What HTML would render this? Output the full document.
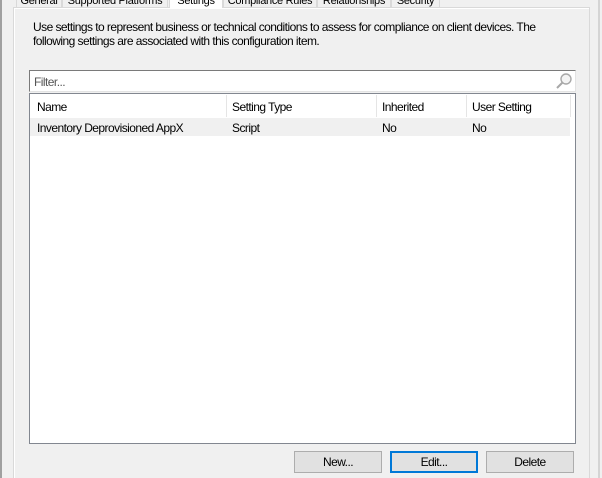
<!DOCTYPE html>
<html><head><meta charset="utf-8"><style>
*{margin:0;padding:0;box-sizing:border-box}
body{width:602px;height:478px;background:#f0f0f0;position:relative;overflow:hidden;font-family:"Liberation Sans",Tahoma,sans-serif;font-size:12px;color:#000}
.a{position:absolute}
.tab{position:absolute;top:-4px;height:11px;border:1px solid #d9d9d9;border-bottom:none;background:#f0f0f0;font-size:11px;line-height:8px;text-align:center;overflow:hidden;color:#000;letter-spacing:-0.3px}
.t{position:absolute;white-space:nowrap;letter-spacing:-0.55px}
.btn{position:absolute;top:451px;width:88px;height:22px;background:#e1e1e1;border:1px solid #adadad;text-align:center;line-height:20px;font-size:12px;letter-spacing:-0.55px}
</style></head><body>
<div class="a" style="left:0;top:0;width:2px;height:478px;background:#a0a0a0"></div>
<div class="a" style="left:598px;top:0;width:2px;height:478px;background:#d4d4d4"></div>
<div class="a" style="left:13px;top:7px;width:577px;height:471px;border:1px solid #d9d9d9;border-bottom:none;background:#f0f0f0"></div>
<div class="a" style="left:14px;top:8px;width:575px;height:470px;border:1px solid #fff;border-bottom:none;border-right:none"></div>
<div class="tab" style="left:16px;width:46px">General</div>
<div class="tab" style="left:62px;width:106px">Supported Platforms</div>
<div class="tab" style="left:169px;width:54px;height:12px;background:#fff;border-color:#d9d9d9">Settings</div>
<div class="tab" style="left:223px;width:94px">Compliance Rules</div>
<div class="tab" style="left:317px;width:74px">Relationships</div>
<div class="tab" style="left:391px;width:49px">Security</div>
<div class="t" style="left:33px;top:20px;line-height:14px">Use settings to represent business or technical conditions to assess for compliance on client devices. The<br>following settings are associated with this configuration item.</div>
<div class="a" style="left:29px;top:70px;width:547px;height:22px;background:#fff;border:1px solid #e3e3e3;border-top-color:#7a7a7a;border-left-color:#7a7a7a"></div>
<div class="t" style="left:34px;top:75px;color:#555">Filter...</div>
<svg class="a" style="left:555px;top:72px" width="18" height="18" viewBox="0 0 18 18"><circle cx="11" cy="7" r="5" fill="#f4f4f4" stroke="#a8a8a8" stroke-width="1.4"/><line x1="7.5" y1="10.5" x2="2" y2="16" stroke="#a8a8a8" stroke-width="2"/></svg>
<div class="a" style="left:29px;top:93px;width:547px;height:351px;background:#fff;border:1px solid #828790"></div>
<div class="a" style="left:226px;top:95px;width:1px;height:22px;background:#e5e5e5"></div>
<div class="a" style="left:376px;top:95px;width:1px;height:22px;background:#e5e5e5"></div>
<div class="a" style="left:466px;top:95px;width:1px;height:22px;background:#e5e5e5"></div>
<div class="a" style="left:570px;top:95px;width:1px;height:22px;background:#e5e5e5"></div>
<div class="t" style="left:37px;top:100px">Name</div>
<div class="t" style="left:232px;top:100px">Setting Type</div>
<div class="t" style="left:382px;top:100px">Inherited</div>
<div class="t" style="left:472px;top:100px">User Setting</div>
<div class="a" style="left:30px;top:118px;width:540px;height:18px;background:#f0f0f0"></div>
<div class="t" style="left:37px;top:121px">Inventory Deprovisioned AppX</div>
<div class="t" style="left:232px;top:121px">Script</div>
<div class="t" style="left:382px;top:121px">No</div>
<div class="t" style="left:472px;top:121px">No</div>
<div class="btn" style="left:294px">New...</div>
<div class="btn" style="left:390px;border:2px solid #0078d7;line-height:18px">Edit...</div>
<div class="btn" style="left:486px">Delete</div>
</body></html>
